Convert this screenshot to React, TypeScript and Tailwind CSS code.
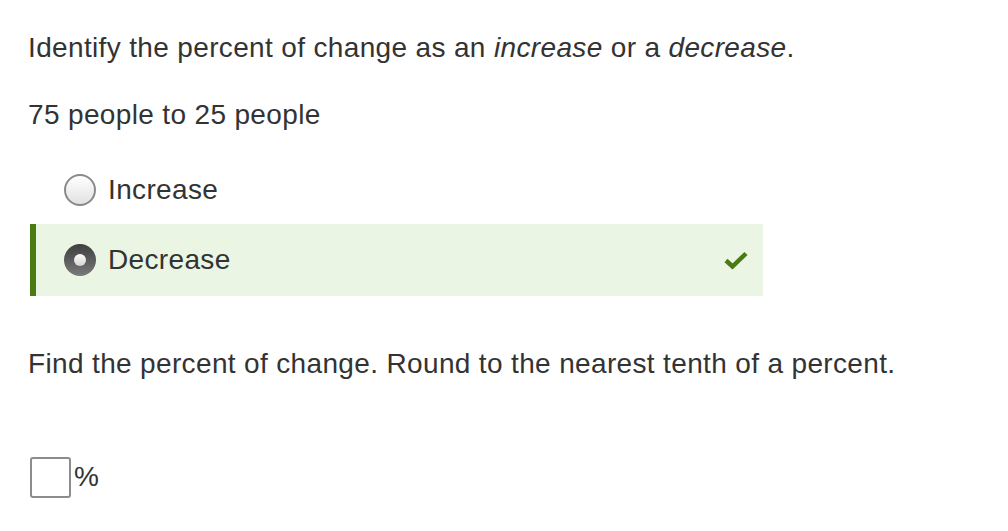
export default function App() {
  return (
    <div className="w-[1008px] h-[531px] bg-white text-[#333] text-[28px] tracking-[0.35px] overflow-hidden" style={{ fontFamily: '"Liberation Sans", Arial, sans-serif' }}>
      <div className="pl-[28px] pt-[33px]">
        <p className="leading-[30px]">
          Identify the percent of change as an <i>increase</i> or a <i>decrease</i>.
        </p>
        <p className="leading-[30px] mt-[37px]">75 people to 25 people</p>
      </div>

      <div className="mt-[24px] ml-[30px] w-[733px]">
        <div className="flex items-center h-[72px] pl-[34px]">
          <span className="w-[32px] h-[32px] rounded-full border-2 border-[#8a8a8a] bg-gradient-to-b from-white to-[#e2e2e2]" />
          <span className="ml-[12px]">Increase</span>
        </div>
        <div className="flex items-center h-[72px] bg-[#eaf5e4] border-l-[6px] border-[#4b7a12] pl-[28px] mt-[-2px]">
          <span className="w-[32px] h-[32px] rounded-full bg-gradient-to-b from-[#3f3f3f] to-[#7a7a7a] flex items-center justify-center">
            <span className="w-[12px] h-[12px] rounded-full bg-gradient-to-b from-white to-[#d4d4d4]" />
          </span>
          <span className="ml-[12px]">Decrease</span>
          <svg className="ml-auto mr-[15px]" width="24" height="20" viewBox="0 0 24 20">
            <path d="M2 10.5 L8.5 16.5 L22 3.5" fill="none" stroke="#4b7a12" strokeWidth="4.5" />
          </svg>
        </div>
      </div>

      <p className="pl-[28px] mt-[53px] leading-[30px]">
        Find the percent of change. Round to the nearest tenth of a percent.
      </p>

      <div className="flex items-center pl-[30px] mt-[77px]">
        <span className="w-[41px] h-[41px] border-2 border-[#8c8c8c] rounded-[3px] bg-white" />
        <span className="ml-[3px]">%</span>
      </div>
    </div>
  );
}
